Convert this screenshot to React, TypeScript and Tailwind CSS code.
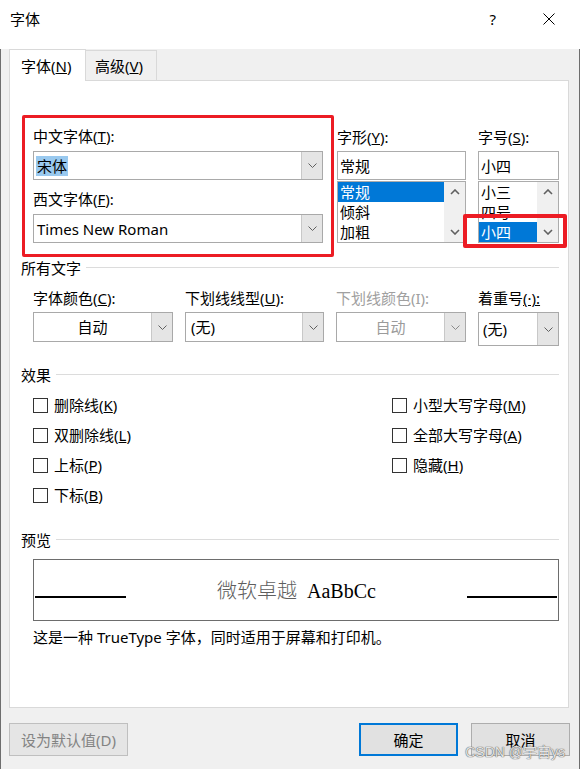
import React from "react";

const ui = "font-['Noto_Sans','Noto_Sans_CJK_SC',sans-serif]";

function Chevron({ color = "#606060" }: { color?: string }) {
  return (
    <svg width="9" height="5" viewBox="0 0 9 5">
      <path d="M0.5 0.5 L4.5 4.5 L8.5 0.5" fill="none" stroke={color} strokeWidth="1" />
    </svg>
  );
}

function Arrow({ up }: { up?: boolean }) {
  return (
    <svg width="10" height="6" viewBox="0 0 10 6">
      <path
        d={up ? "M1 5 L5 1 L9 5" : "M1 1 L5 5 L9 1"}
        fill="none"
        stroke="#606060"
        strokeWidth="1.6"
      />
    </svg>
  );
}

function Combo({
  className,
  children,
  center,
  disabled,
}: {
  className: string;
  children: React.ReactNode;
  center?: boolean;
  disabled?: boolean;
}) {
  return (
    <div className={`flex border border-[#a9a9a9] bg-white ${className}`}>
      <div
        className={`flex-1 flex items-center ${center ? "justify-center" : "pl-[2px]"} ${
          disabled ? "text-[#9b9b9b]" : "text-black"
        }`}
      >
        {children}
      </div>
      <div className="w-[21px] flex items-center justify-center bg-[#e5e5e5] border-l border-[#c8c8c8]">
        <Chevron color={disabled ? "#8a8a8a" : "#606060"} />
      </div>
    </div>
  );
}

function M({ k }: { k: string }) {
  return (
    <>
      (<span className="underline">{k}</span>)
    </>
  );
}

function Section({ title }: { title: string }) {
  return (
    <div className="flex items-center h-[20px]">
      <span>{title}</span>
      <div className="flex-1 h-px bg-[#dcdcdc] ml-[5px] -mt-[1px]" />
    </div>
  );
}

function Check({ children }: { children: React.ReactNode }) {
  return (
    <div className="h-[30px] flex items-center">
      <div className="w-[15px] h-[15px] border border-[#333] bg-white" />
      <span className="ml-[6px]">{children}</span>
    </div>
  );
}

function ListBox({
  items,
  selected,
  className,
}: {
  items: string[];
  selected: number;
  className: string;
}) {
  return (
    <div className={`mt-[1px] h-[62px] flex border border-[#acacac] bg-white ${className}`}>
      <div className="flex-1 flex flex-col overflow-hidden">
        {items.map((it, i) => (
          <div
            key={it}
            className={`h-[20px] shrink-0 leading-[20px] pl-[2px] ${
              i === selected ? "bg-[#0078d7] text-white" : ""
            }`}
          >
            {it}
          </div>
        ))}
      </div>
      <div className="w-[21px] bg-[#f0f0f0] flex flex-col justify-between">
        <div className="h-[20px] flex items-center justify-center">
          <Arrow up />
        </div>
        <div className="h-[20px] flex items-center justify-center">
          <Arrow />
        </div>
      </div>
    </div>
  );
}

export default function App() {
  return (
    <div className={`w-[580px] h-[769px] relative text-[15px] leading-[20px] text-black ${ui}`}>
      {/* Title bar */}
      <div className="h-[38px] bg-white flex items-center pl-[10px]">
        <span>字体</span>
        <span className="ml-auto mr-[47px]">?</span>
        <svg width="12" height="12" viewBox="0 0 12 12" className="mr-[25px]">
          <path d="M0.5 0.5 L11.5 11.5 M11.5 0.5 L0.5 11.5" stroke="#000" strokeWidth="1" />
        </svg>
      </div>

      <div className="h-[731px] bg-[#f0f0f0] border-x border-b border-[#6e6e6e]">
        {/* Tabs */}
        <div className="flex items-end ml-[8px] mt-[11px]">
          <div className="relative z-10 h-[32px] w-[77px] -mb-[1px] bg-white border border-b-0 border-[#d9d9d9] flex items-center pl-[11px]">
            字体<M k="N" />
          </div>
          <div className="h-[30px] w-[71px] border border-l-0 border-b-0 border-[#d9d9d9] flex items-center pl-[9px]">
            高级<M k="V" />
          </div>
        </div>

        {/* Panel */}
        <div className="ml-[8px] w-[560px] h-[628px] bg-white border border-[#d9d9d9] pl-[11px] pr-[9px] pt-[34px]">
          {/* Fonts row */}
          <div className="flex items-start">
            <div className="ml-[1px] w-[312px] border-[3px] border-[#ec1c24] rounded-[2px] px-[8px] pt-[8px] pb-[11px]">
              <div>
                中文字体<M k="T" />:
              </div>
              <Combo className="mt-[5px] h-[29px]">
                <span className="bg-[#99c9ef] px-[1px]">宋体</span>
              </Combo>
              <div className="mt-[9px]">
                西文字体<M k="F" />:
              </div>
              <Combo className="mt-[5px] h-[29px]">
                <span className="pl-[1px]">Times New Roman</span>
              </Combo>
            </div>

            <div className="ml-[3px] w-[129px] pt-[12px]">
              <div>
                字形<M k="Y" />:
              </div>
              <div className="mt-[4px] h-[29px] border border-[#acacac] flex items-center pl-[2px]">常规</div>
              <ListBox items={["常规", "倾斜", "加粗"]} selected={0} className="w-[129px]" />
            </div>

            <div className="ml-[12px] w-[81px] pt-[12px]">
              <div>
                字号<M k="S" />:
              </div>
              <div className="mt-[4px] h-[29px] border border-[#acacac] flex items-center pl-[2px]">小四</div>
              <div className="relative">
                <ListBox items={["小三", "四号", "小四"]} selected={2} className="w-[81px]" />
                <div className="absolute left-[-15px] top-[33px] w-[104px] h-[34px] border-[4px] border-[#ec1c24] rounded-[2px]" />
              </div>
            </div>
          </div>

          {/* All text */}
          <div className="mt-[1px]">
            <Section title="所有文字" />
          </div>
          <div className="flex items-start gap-[12px] pl-[12px] mt-[10px]">
            <div className="w-[140px]">
              <div>
                字体颜色<M k="C" />:
              </div>
              <Combo className="mt-[4px] h-[30px]" center>
                自动
              </Combo>
            </div>
            <div className="w-[139px]">
              <div>
                下划线线型<M k="U" />:
              </div>
              <Combo className="mt-[4px] h-[30px]">
                <span className="pl-[3px]">(无)</span>
              </Combo>
            </div>
            <div className="w-[130px]">
              <div className="text-[#a0a0a0]">下划线颜色(I):</div>
              <Combo className="mt-[4px] h-[30px]" center disabled>
                自动
              </Combo>
            </div>
            <div className="w-[81px]">
              <div>
                着重号<span className="underline">(·):</span>
              </div>
              <Combo className="mt-[4px] h-[34px]">
                <span className="pl-[2px]">(无)</span>
              </Combo>
            </div>
          </div>

          {/* Effects */}
          <div className="mt-[19px]">
            <Section title="效果" />
          </div>
          <div className="mt-[5px] pl-[12px] grid grid-cols-[359px_1fr]">
            <Check>
              删除线<M k="K" />
            </Check>
            <Check>
              小型大写字母<M k="M" />
            </Check>
            <Check>
              双删除线<M k="L" />
            </Check>
            <Check>
              全部大写字母<M k="A" />
            </Check>
            <Check>
              上标<M k="P" />
            </Check>
            <Check>
              隐藏<M k="H" />
            </Check>
            <Check>
              下标<M k="B" />
            </Check>
          </div>

          {/* Preview */}
          <div className="mt-[20px]">
            <Section title="预览" />
          </div>
          <div className="mt-[9px] ml-[12px] h-[62px] border border-[#6d6d6d] flex">
            <div className="ml-[1px] mt-[36px] w-[91px] h-[2px] bg-black" />
            <div className="flex-1 text-center mt-[19px] text-[20px] leading-[24px]">
              <span className="text-[#5e5e5e] font-['Liberation_Serif','Noto_Sans_CJK_SC',serif] font-light">
                微软卓越
              </span>
              <span className="ml-[10px] font-['Liberation_Serif',serif]">AaBbCc</span>
            </div>
            <div className="mr-[1px] mt-[36px] w-[90px] h-[2px] bg-black" />
          </div>
          <div className="mt-[6px] ml-[12px]">这是一种 TrueType 字体，同时适用于屏幕和打印机。</div>
        </div>

        {/* Buttons */}
        <div className="mt-[15px] flex ml-[8px] mr-[9px]">
          <div className="w-[119px] h-[33px] bg-[#e5e5e5] border border-[#bfbfbf] flex items-center justify-center text-[#838383]">
            设为默认值(D)
          </div>
          <div className="ml-auto w-[99px] h-[33px] bg-[#e1e1e1] border-2 border-[#0078d7] flex items-center justify-center">
            确定
          </div>
          <div className="ml-[13px] w-[99px] h-[33px] bg-[#e1e1e1] border border-[#adadad] flex items-center justify-center">
            取消
          </div>
        </div>
      </div>

      {/* Watermark */}
      <div className="absolute right-[15px] bottom-[9px] text-[14px] leading-[16px] text-[#e4e4e4] font-['Liberation_Sans','Noto_Sans_CJK_SC',sans-serif] [text-shadow:0_0_1px_#555,0_0_1px_#555]">
        CSDN @宇宙ys
      </div>
    </div>
  );
}
